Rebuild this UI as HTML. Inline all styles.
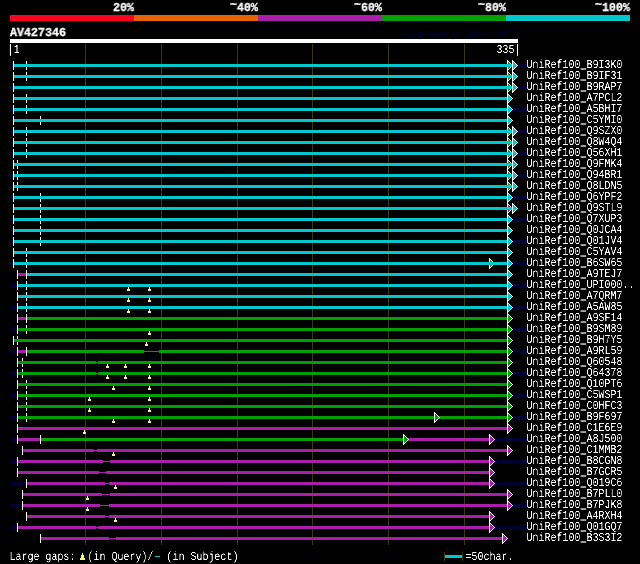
<!DOCTYPE html>
<html><head><meta charset="utf-8"><title>AlignView AV427346</title>
<style>
html,body{margin:0;padding:0;background:#000;}
#c{position:relative;width:640px;height:564px;background:#000;overflow:hidden;}
#c svg{position:absolute;left:0;top:0;}
#c span{position:absolute;display:block;white-space:pre;line-height:1;color:#fff;transform-origin:0 0;will-change:transform;text-rendering:geometricPrecision;font-family:"Liberation Mono",monospace;}
.s{font-size:12.14px;transform:scaleX(0.8237);padding-left:0.6px;filter:url(#sh);}
.s u{text-decoration:none;-webkit-text-stroke:0.25px #fff;}
.b{font-size:12.14px;font-weight:bold;transform:scaleX(0.961);-webkit-text-stroke:0.3px #fff;}
.b i{font-style:normal;position:relative;top:-3.5px;}
.t{font-size:10.62px;transform:scaleX(0.7847);}
</style></head><body>
<div id="c">
<svg width="640" height="564" viewBox="0 0 640 564" shape-rendering="crispEdges">
<defs><filter id="sh" x="0" y="0" width="100%" height="100%" color-interpolation-filters="sRGB"><feComponentTransfer><feFuncA type="linear" slope="2.5" intercept="-0.75"/></feComponentTransfer></filter></defs>
<rect x="10" y="15" width="124" height="6" fill="#ff001e"/>
<rect x="134" y="15" width="124" height="6" fill="#e66400"/>
<rect x="258" y="15" width="124" height="6" fill="#aa1eaa"/>
<rect x="382" y="15" width="124" height="6" fill="#00a000"/>
<rect x="506" y="15" width="124" height="6" fill="#00c8cc"/>
<rect x="10" y="39" width="508" height="4" fill="#ffffff"/>
<rect x="85" y="44" width="1" height="501" fill="#3c3a04"/>
<rect x="161" y="44" width="1" height="501" fill="#3c3a04"/>
<rect x="237" y="44" width="1" height="501" fill="#3c3a04"/>
<rect x="312" y="44" width="1" height="501" fill="#3c3a04"/>
<rect x="388" y="44" width="1" height="501" fill="#3c3a04"/>
<rect x="464" y="44" width="1" height="501" fill="#3c3a04"/>
<rect x="10" y="64" width="517" height="3" fill="#000032"/>
<rect x="10" y="86" width="517" height="3" fill="#000032"/>
<rect x="10" y="108" width="517" height="3" fill="#000032"/>
<rect x="10" y="130" width="517" height="3" fill="#000032"/>
<rect x="10" y="152" width="517" height="3" fill="#000032"/>
<rect x="10" y="174" width="517" height="3" fill="#000032"/>
<rect x="10" y="196" width="517" height="3" fill="#000032"/>
<rect x="10" y="218" width="517" height="3" fill="#000032"/>
<rect x="10" y="240" width="517" height="3" fill="#000032"/>
<rect x="10" y="262" width="517" height="3" fill="#000032"/>
<rect x="10" y="284" width="517" height="3" fill="#000032"/>
<rect x="10" y="306" width="517" height="3" fill="#000032"/>
<rect x="10" y="328" width="517" height="3" fill="#000032"/>
<rect x="10" y="350" width="517" height="3" fill="#000032"/>
<rect x="10" y="372" width="517" height="3" fill="#000032"/>
<rect x="10" y="394" width="517" height="3" fill="#000032"/>
<rect x="10" y="416" width="517" height="3" fill="#000032"/>
<rect x="10" y="438" width="517" height="3" fill="#000032"/>
<rect x="10" y="460" width="517" height="3" fill="#000032"/>
<rect x="10" y="482" width="517" height="3" fill="#000032"/>
<rect x="10" y="504" width="517" height="3" fill="#000032"/>
<rect x="10" y="526" width="517" height="3" fill="#000032"/>
<rect x="26" y="61" width="1" height="9" fill="#ffffff"/>
<polygon points="507.5,60.5 507.5,70.5 512.5,65.5" fill="#00a000" stroke="#ffffff" stroke-width="1"/>
<rect x="13" y="61" width="1" height="9" fill="#ffffff"/>
<rect x="14" y="64" width="498" height="3" fill="#00c8cc"/>
<polygon points="512.5,60.5 512.5,70.5 517.5,65.5" fill="#00c8cc" stroke="#ffffff" stroke-width="1"/>
<rect x="26" y="72" width="1" height="9" fill="#ffffff"/>
<polygon points="507.5,71.5 507.5,81.5 512.5,76.5" fill="#00a000" stroke="#ffffff" stroke-width="1"/>
<rect x="13" y="72" width="1" height="9" fill="#ffffff"/>
<rect x="14" y="75" width="498" height="3" fill="#00c8cc"/>
<polygon points="512.5,71.5 512.5,81.5 517.5,76.5" fill="#00c8cc" stroke="#ffffff" stroke-width="1"/>
<polygon points="507.5,82.5 507.5,92.5 512.5,87.5" fill="#00a000" stroke="#ffffff" stroke-width="1"/>
<rect x="13" y="83" width="1" height="9" fill="#ffffff"/>
<rect x="14" y="86" width="498" height="3" fill="#00c8cc"/>
<polygon points="512.5,82.5 512.5,92.5 517.5,87.5" fill="#00c8cc" stroke="#ffffff" stroke-width="1"/>
<rect x="26" y="94" width="1" height="9" fill="#ffffff"/>
<rect x="13" y="94" width="1" height="9" fill="#ffffff"/>
<rect x="14" y="97" width="493" height="3" fill="#00c8cc"/>
<polygon points="507.5,93.5 507.5,103.5 512.5,98.5" fill="#00c8cc" stroke="#ffffff" stroke-width="1"/>
<rect x="26" y="105" width="1" height="9" fill="#ffffff"/>
<rect x="13" y="105" width="1" height="9" fill="#ffffff"/>
<rect x="14" y="108" width="493" height="3" fill="#00c8cc"/>
<polygon points="507.5,104.5 507.5,114.5 512.5,109.5" fill="#00c8cc" stroke="#ffffff" stroke-width="1"/>
<rect x="40" y="116" width="1" height="9" fill="#ffffff"/>
<rect x="13" y="116" width="1" height="9" fill="#ffffff"/>
<rect x="14" y="119" width="493" height="3" fill="#00c8cc"/>
<polygon points="507.5,115.5 507.5,125.5 512.5,120.5" fill="#00c8cc" stroke="#ffffff" stroke-width="1"/>
<rect x="26" y="127" width="1" height="9" fill="#ffffff"/>
<polygon points="507.5,126.5 507.5,136.5 512.5,131.5" fill="#00a000" stroke="#ffffff" stroke-width="1"/>
<rect x="13" y="127" width="1" height="9" fill="#ffffff"/>
<rect x="14" y="130" width="498" height="3" fill="#00c8cc"/>
<polygon points="512.5,126.5 512.5,136.5 517.5,131.5" fill="#00c8cc" stroke="#ffffff" stroke-width="1"/>
<rect x="26" y="138" width="1" height="9" fill="#ffffff"/>
<polygon points="507.5,137.5 507.5,147.5 512.5,142.5" fill="#00a000" stroke="#ffffff" stroke-width="1"/>
<rect x="13" y="138" width="1" height="9" fill="#ffffff"/>
<rect x="14" y="141" width="498" height="3" fill="#00c8cc"/>
<polygon points="512.5,137.5 512.5,147.5 517.5,142.5" fill="#00c8cc" stroke="#ffffff" stroke-width="1"/>
<rect x="26" y="149" width="1" height="9" fill="#ffffff"/>
<polygon points="507.5,148.5 507.5,158.5 512.5,153.5" fill="#00a000" stroke="#ffffff" stroke-width="1"/>
<rect x="13" y="149" width="1" height="9" fill="#ffffff"/>
<rect x="14" y="152" width="498" height="3" fill="#00c8cc"/>
<polygon points="512.5,148.5 512.5,158.5 517.5,153.5" fill="#00c8cc" stroke="#ffffff" stroke-width="1"/>
<rect x="17" y="160" width="1" height="9" fill="#ffffff"/>
<polygon points="507.5,159.5 507.5,169.5 512.5,164.5" fill="#00a000" stroke="#ffffff" stroke-width="1"/>
<rect x="13" y="160" width="1" height="9" fill="#ffffff"/>
<rect x="14" y="163" width="498" height="3" fill="#00c8cc"/>
<polygon points="512.5,159.5 512.5,169.5 517.5,164.5" fill="#00c8cc" stroke="#ffffff" stroke-width="1"/>
<rect x="17" y="171" width="1" height="9" fill="#ffffff"/>
<polygon points="507.5,170.5 507.5,180.5 512.5,175.5" fill="#00a000" stroke="#ffffff" stroke-width="1"/>
<rect x="13" y="171" width="1" height="9" fill="#ffffff"/>
<rect x="14" y="174" width="498" height="3" fill="#00c8cc"/>
<polygon points="512.5,170.5 512.5,180.5 517.5,175.5" fill="#00c8cc" stroke="#ffffff" stroke-width="1"/>
<rect x="17" y="182" width="1" height="9" fill="#ffffff"/>
<polygon points="507.5,181.5 507.5,191.5 512.5,186.5" fill="#00a000" stroke="#ffffff" stroke-width="1"/>
<rect x="13" y="182" width="1" height="9" fill="#ffffff"/>
<rect x="14" y="185" width="498" height="3" fill="#00c8cc"/>
<polygon points="512.5,181.5 512.5,191.5 517.5,186.5" fill="#00c8cc" stroke="#ffffff" stroke-width="1"/>
<rect x="40" y="193" width="1" height="9" fill="#ffffff"/>
<rect x="13" y="193" width="1" height="9" fill="#ffffff"/>
<rect x="14" y="196" width="493" height="3" fill="#00c8cc"/>
<polygon points="507.5,192.5 507.5,202.5 512.5,197.5" fill="#00c8cc" stroke="#ffffff" stroke-width="1"/>
<rect x="40" y="204" width="1" height="9" fill="#ffffff"/>
<polygon points="507.5,203.5 507.5,213.5 512.5,208.5" fill="#aa1eaa" stroke="#ffffff" stroke-width="1"/>
<rect x="13" y="204" width="1" height="9" fill="#ffffff"/>
<rect x="14" y="207" width="498" height="3" fill="#00c8cc"/>
<polygon points="512.5,203.5 512.5,213.5 517.5,208.5" fill="#00c8cc" stroke="#ffffff" stroke-width="1"/>
<rect x="40" y="215" width="1" height="9" fill="#ffffff"/>
<rect x="13" y="215" width="1" height="9" fill="#ffffff"/>
<rect x="14" y="218" width="493" height="3" fill="#00c8cc"/>
<polygon points="507.5,214.5 507.5,224.5 512.5,219.5" fill="#00c8cc" stroke="#ffffff" stroke-width="1"/>
<rect x="40" y="226" width="1" height="9" fill="#ffffff"/>
<rect x="13" y="226" width="1" height="9" fill="#ffffff"/>
<rect x="14" y="229" width="493" height="3" fill="#00c8cc"/>
<polygon points="507.5,225.5 507.5,235.5 512.5,230.5" fill="#00c8cc" stroke="#ffffff" stroke-width="1"/>
<rect x="40" y="237" width="1" height="9" fill="#ffffff"/>
<rect x="13" y="237" width="1" height="9" fill="#ffffff"/>
<rect x="14" y="240" width="493" height="3" fill="#00c8cc"/>
<polygon points="507.5,236.5 507.5,246.5 512.5,241.5" fill="#00c8cc" stroke="#ffffff" stroke-width="1"/>
<rect x="26" y="248" width="1" height="9" fill="#ffffff"/>
<rect x="13" y="248" width="1" height="9" fill="#ffffff"/>
<rect x="14" y="251" width="493" height="3" fill="#00c8cc"/>
<polygon points="507.5,247.5 507.5,257.5 512.5,252.5" fill="#00c8cc" stroke="#ffffff" stroke-width="1"/>
<rect x="26" y="259" width="1" height="9" fill="#ffffff"/>
<polygon points="489.5,258.5 489.5,268.5 494.5,263.5" fill="#00a000" stroke="#ffffff" stroke-width="1"/>
<rect x="13" y="259" width="1" height="9" fill="#ffffff"/>
<rect x="14" y="262" width="493" height="3" fill="#00c8cc"/>
<polygon points="507.5,258.5 507.5,268.5 512.5,263.5" fill="#00c8cc" stroke="#ffffff" stroke-width="1"/>
<rect x="17" y="270" width="1" height="9" fill="#ffffff"/>
<rect x="18" y="273" width="8" height="3" fill="#aa1eaa"/>
<rect x="26" y="270" width="1" height="9" fill="#ffffff"/>
<rect x="27" y="273" width="480" height="3" fill="#00c8cc"/>
<polygon points="507.5,269.5 507.5,279.5 512.5,274.5" fill="#00c8cc" stroke="#ffffff" stroke-width="1"/>
<rect x="26" y="281" width="1" height="9" fill="#ffffff"/>
<rect x="17" y="281" width="1" height="9" fill="#ffffff"/>
<rect x="18" y="284" width="489" height="3" fill="#00c8cc"/>
<polygon points="507.5,280.5 507.5,290.5 512.5,285.5" fill="#00c8cc" stroke="#ffffff" stroke-width="1"/>
<rect x="128" y="287" width="1" height="2" fill="#fff47a"/>
<rect x="127" y="289" width="3" height="2" fill="#fff47a"/>
<rect x="149" y="287" width="1" height="2" fill="#fff47a"/>
<rect x="148" y="289" width="3" height="2" fill="#fff47a"/>
<rect x="26" y="292" width="1" height="9" fill="#ffffff"/>
<rect x="17" y="292" width="1" height="9" fill="#ffffff"/>
<rect x="18" y="295" width="489" height="3" fill="#00c8cc"/>
<polygon points="507.5,291.5 507.5,301.5 512.5,296.5" fill="#00c8cc" stroke="#ffffff" stroke-width="1"/>
<rect x="128" y="298" width="1" height="2" fill="#fff47a"/>
<rect x="127" y="300" width="3" height="2" fill="#fff47a"/>
<rect x="149" y="298" width="1" height="2" fill="#fff47a"/>
<rect x="148" y="300" width="3" height="2" fill="#fff47a"/>
<rect x="26" y="303" width="1" height="9" fill="#ffffff"/>
<rect x="17" y="303" width="1" height="9" fill="#ffffff"/>
<rect x="18" y="306" width="489" height="3" fill="#00c8cc"/>
<polygon points="507.5,302.5 507.5,312.5 512.5,307.5" fill="#00c8cc" stroke="#ffffff" stroke-width="1"/>
<rect x="128" y="309" width="1" height="2" fill="#fff47a"/>
<rect x="127" y="311" width="3" height="2" fill="#fff47a"/>
<rect x="149" y="309" width="1" height="2" fill="#fff47a"/>
<rect x="148" y="311" width="3" height="2" fill="#fff47a"/>
<rect x="17" y="314" width="1" height="9" fill="#ffffff"/>
<rect x="18" y="317" width="8" height="3" fill="#aa1eaa"/>
<rect x="26" y="314" width="1" height="9" fill="#ffffff"/>
<rect x="27" y="317" width="480" height="3" fill="#00a000"/>
<polygon points="507.5,313.5 507.5,323.5 512.5,318.5" fill="#00a000" stroke="#ffffff" stroke-width="1"/>
<rect x="26" y="325" width="1" height="9" fill="#ffffff"/>
<rect x="17" y="325" width="1" height="9" fill="#ffffff"/>
<rect x="18" y="328" width="489" height="3" fill="#00a000"/>
<polygon points="507.5,324.5 507.5,334.5 512.5,329.5" fill="#00a000" stroke="#ffffff" stroke-width="1"/>
<rect x="149" y="331" width="1" height="2" fill="#fff47a"/>
<rect x="148" y="333" width="3" height="2" fill="#fff47a"/>
<rect x="17" y="336" width="1" height="9" fill="#ffffff"/>
<rect x="13" y="336" width="1" height="9" fill="#ffffff"/>
<rect x="14" y="339" width="493" height="3" fill="#00a000"/>
<polygon points="507.5,335.5 507.5,345.5 512.5,340.5" fill="#00a000" stroke="#ffffff" stroke-width="1"/>
<rect x="146" y="342" width="1" height="2" fill="#fff47a"/>
<rect x="145" y="344" width="3" height="2" fill="#fff47a"/>
<rect x="17" y="347" width="1" height="9" fill="#ffffff"/>
<rect x="18" y="350" width="8" height="3" fill="#aa1eaa"/>
<rect x="26" y="347" width="1" height="9" fill="#ffffff"/>
<rect x="27" y="350" width="117" height="3" fill="#00a000"/>
<rect x="144" y="350" width="15" height="3" fill="#000"/>
<rect x="144" y="351" width="15" height="1" fill="#00a000"/>
<rect x="159" y="350" width="348" height="3" fill="#00a000"/>
<polygon points="507.5,346.5 507.5,356.5 512.5,351.5" fill="#00a000" stroke="#ffffff" stroke-width="1"/>
<rect x="22" y="358" width="1" height="9" fill="#ffffff"/>
<rect x="17" y="358" width="1" height="9" fill="#ffffff"/>
<rect x="18" y="361" width="78" height="3" fill="#00a000"/>
<rect x="96" y="361" width="2" height="3" fill="#000"/>
<rect x="96" y="362" width="2" height="1" fill="#00a000"/>
<rect x="98" y="361" width="409" height="3" fill="#00a000"/>
<polygon points="507.5,357.5 507.5,367.5 512.5,362.5" fill="#00a000" stroke="#ffffff" stroke-width="1"/>
<rect x="107" y="364" width="1" height="2" fill="#fff47a"/>
<rect x="106" y="366" width="3" height="2" fill="#fff47a"/>
<rect x="125" y="364" width="1" height="2" fill="#fff47a"/>
<rect x="124" y="366" width="3" height="2" fill="#fff47a"/>
<rect x="149" y="364" width="1" height="2" fill="#fff47a"/>
<rect x="148" y="366" width="3" height="2" fill="#fff47a"/>
<rect x="22" y="369" width="1" height="9" fill="#ffffff"/>
<rect x="17" y="369" width="1" height="9" fill="#ffffff"/>
<rect x="18" y="372" width="78" height="3" fill="#00a000"/>
<rect x="96" y="372" width="2" height="3" fill="#000"/>
<rect x="96" y="373" width="2" height="1" fill="#00a000"/>
<rect x="98" y="372" width="409" height="3" fill="#00a000"/>
<polygon points="507.5,368.5 507.5,378.5 512.5,373.5" fill="#00a000" stroke="#ffffff" stroke-width="1"/>
<rect x="107" y="375" width="1" height="2" fill="#fff47a"/>
<rect x="106" y="377" width="3" height="2" fill="#fff47a"/>
<rect x="125" y="375" width="1" height="2" fill="#fff47a"/>
<rect x="124" y="377" width="3" height="2" fill="#fff47a"/>
<rect x="149" y="375" width="1" height="2" fill="#fff47a"/>
<rect x="148" y="377" width="3" height="2" fill="#fff47a"/>
<rect x="26" y="380" width="1" height="9" fill="#ffffff"/>
<rect x="17" y="380" width="1" height="9" fill="#ffffff"/>
<rect x="18" y="383" width="489" height="3" fill="#00a000"/>
<polygon points="507.5,379.5 507.5,389.5 512.5,384.5" fill="#00a000" stroke="#ffffff" stroke-width="1"/>
<rect x="113" y="386" width="1" height="2" fill="#fff47a"/>
<rect x="112" y="388" width="3" height="2" fill="#fff47a"/>
<rect x="149" y="386" width="1" height="2" fill="#fff47a"/>
<rect x="148" y="388" width="3" height="2" fill="#fff47a"/>
<rect x="26" y="391" width="1" height="9" fill="#ffffff"/>
<rect x="17" y="391" width="1" height="9" fill="#ffffff"/>
<rect x="18" y="394" width="489" height="3" fill="#00a000"/>
<polygon points="507.5,390.5 507.5,400.5 512.5,395.5" fill="#00a000" stroke="#ffffff" stroke-width="1"/>
<rect x="89" y="397" width="1" height="2" fill="#fff47a"/>
<rect x="88" y="399" width="3" height="2" fill="#fff47a"/>
<rect x="149" y="397" width="1" height="2" fill="#fff47a"/>
<rect x="148" y="399" width="3" height="2" fill="#fff47a"/>
<rect x="26" y="402" width="1" height="9" fill="#ffffff"/>
<rect x="17" y="402" width="1" height="9" fill="#ffffff"/>
<rect x="18" y="405" width="489" height="3" fill="#00a000"/>
<polygon points="507.5,401.5 507.5,411.5 512.5,406.5" fill="#00a000" stroke="#ffffff" stroke-width="1"/>
<rect x="89" y="408" width="1" height="2" fill="#fff47a"/>
<rect x="88" y="410" width="3" height="2" fill="#fff47a"/>
<rect x="149" y="408" width="1" height="2" fill="#fff47a"/>
<rect x="148" y="410" width="3" height="2" fill="#fff47a"/>
<rect x="26" y="413" width="1" height="9" fill="#ffffff"/>
<rect x="17" y="413" width="1" height="9" fill="#ffffff"/>
<rect x="18" y="416" width="489" height="3" fill="#00a000"/>
<polygon points="507.5,412.5 507.5,422.5 512.5,417.5" fill="#00a000" stroke="#ffffff" stroke-width="1"/>
<polygon points="434.5,412.5 434.5,422.5 439.5,417.5" fill="#00a000" stroke="#ffffff" stroke-width="1"/>
<rect x="113" y="419" width="1" height="2" fill="#fff47a"/>
<rect x="112" y="421" width="3" height="2" fill="#fff47a"/>
<rect x="149" y="419" width="1" height="2" fill="#fff47a"/>
<rect x="148" y="421" width="3" height="2" fill="#fff47a"/>
<rect x="17" y="424" width="1" height="9" fill="#ffffff"/>
<rect x="18" y="427" width="489" height="3" fill="#aa1eaa"/>
<polygon points="507.5,423.5 507.5,433.5 512.5,428.5" fill="#aa1eaa" stroke="#ffffff" stroke-width="1"/>
<rect x="84" y="430" width="1" height="2" fill="#fff47a"/>
<rect x="83" y="432" width="3" height="2" fill="#fff47a"/>
<rect x="17" y="435" width="1" height="9" fill="#ffffff"/>
<rect x="18" y="438" width="471" height="3" fill="#aa1eaa"/>
<polygon points="489.5,434.5 489.5,444.5 494.5,439.5" fill="#aa1eaa" stroke="#ffffff" stroke-width="1"/>
<rect x="40" y="435" width="1" height="9" fill="#ffffff"/>
<rect x="41" y="438" width="362" height="3" fill="#00a000"/>
<polygon points="403.5,434.5 403.5,444.5 408.5,439.5" fill="#00a000" stroke="#ffffff" stroke-width="1"/>
<rect x="22" y="446" width="1" height="9" fill="#ffffff"/>
<rect x="23" y="449" width="71" height="3" fill="#aa1eaa"/>
<rect x="94" y="449" width="3" height="3" fill="#000"/>
<rect x="94" y="450" width="3" height="1" fill="#aa1eaa"/>
<rect x="97" y="449" width="410" height="3" fill="#aa1eaa"/>
<polygon points="507.5,445.5 507.5,455.5 512.5,450.5" fill="#aa1eaa" stroke="#ffffff" stroke-width="1"/>
<rect x="113" y="452" width="1" height="2" fill="#fff47a"/>
<rect x="112" y="454" width="3" height="2" fill="#fff47a"/>
<rect x="17" y="457" width="1" height="9" fill="#ffffff"/>
<rect x="18" y="460" width="85" height="3" fill="#aa1eaa"/>
<rect x="103" y="460" width="7" height="3" fill="#000"/>
<rect x="103" y="461" width="7" height="1" fill="#aa1eaa"/>
<rect x="110" y="460" width="379" height="3" fill="#aa1eaa"/>
<polygon points="489.5,456.5 489.5,466.5 494.5,461.5" fill="#aa1eaa" stroke="#ffffff" stroke-width="1"/>
<rect x="17" y="468" width="1" height="9" fill="#ffffff"/>
<rect x="18" y="471" width="81" height="3" fill="#aa1eaa"/>
<rect x="99" y="471" width="7" height="3" fill="#000"/>
<rect x="99" y="472" width="7" height="1" fill="#aa1eaa"/>
<rect x="106" y="471" width="383" height="3" fill="#aa1eaa"/>
<polygon points="489.5,467.5 489.5,477.5 494.5,472.5" fill="#aa1eaa" stroke="#ffffff" stroke-width="1"/>
<rect x="26" y="479" width="1" height="9" fill="#ffffff"/>
<rect x="27" y="482" width="78" height="3" fill="#aa1eaa"/>
<rect x="105" y="482" width="4" height="3" fill="#000"/>
<rect x="105" y="483" width="4" height="1" fill="#aa1eaa"/>
<rect x="109" y="482" width="380" height="3" fill="#aa1eaa"/>
<polygon points="489.5,478.5 489.5,488.5 494.5,483.5" fill="#aa1eaa" stroke="#ffffff" stroke-width="1"/>
<rect x="115" y="485" width="1" height="2" fill="#fff47a"/>
<rect x="114" y="487" width="3" height="2" fill="#fff47a"/>
<rect x="22" y="490" width="1" height="9" fill="#ffffff"/>
<rect x="23" y="493" width="79" height="3" fill="#aa1eaa"/>
<rect x="102" y="493" width="8" height="3" fill="#000"/>
<rect x="102" y="494" width="8" height="1" fill="#aa1eaa"/>
<rect x="110" y="493" width="397" height="3" fill="#aa1eaa"/>
<polygon points="507.5,489.5 507.5,499.5 512.5,494.5" fill="#aa1eaa" stroke="#ffffff" stroke-width="1"/>
<rect x="87" y="496" width="1" height="2" fill="#fff47a"/>
<rect x="86" y="498" width="3" height="2" fill="#fff47a"/>
<rect x="22" y="501" width="1" height="9" fill="#ffffff"/>
<rect x="23" y="504" width="77" height="3" fill="#aa1eaa"/>
<rect x="100" y="504" width="9" height="3" fill="#000"/>
<rect x="100" y="505" width="9" height="1" fill="#aa1eaa"/>
<rect x="109" y="504" width="398" height="3" fill="#aa1eaa"/>
<polygon points="507.5,500.5 507.5,510.5 512.5,505.5" fill="#aa1eaa" stroke="#ffffff" stroke-width="1"/>
<rect x="87" y="507" width="1" height="2" fill="#fff47a"/>
<rect x="86" y="509" width="3" height="2" fill="#fff47a"/>
<rect x="26" y="512" width="1" height="9" fill="#ffffff"/>
<rect x="27" y="515" width="78" height="3" fill="#aa1eaa"/>
<rect x="105" y="515" width="4" height="3" fill="#000"/>
<rect x="105" y="516" width="4" height="1" fill="#aa1eaa"/>
<rect x="109" y="515" width="380" height="3" fill="#aa1eaa"/>
<polygon points="489.5,511.5 489.5,521.5 494.5,516.5" fill="#aa1eaa" stroke="#ffffff" stroke-width="1"/>
<rect x="115" y="518" width="1" height="2" fill="#fff47a"/>
<rect x="114" y="520" width="3" height="2" fill="#fff47a"/>
<rect x="17" y="523" width="1" height="9" fill="#ffffff"/>
<rect x="18" y="526" width="78" height="3" fill="#aa1eaa"/>
<rect x="96" y="526" width="2" height="3" fill="#000"/>
<rect x="96" y="527" width="2" height="1" fill="#aa1eaa"/>
<rect x="98" y="526" width="391" height="3" fill="#aa1eaa"/>
<polygon points="489.5,522.5 489.5,532.5 494.5,527.5" fill="#aa1eaa" stroke="#ffffff" stroke-width="1"/>
<rect x="40" y="534" width="1" height="9" fill="#ffffff"/>
<rect x="41" y="537" width="68" height="3" fill="#aa1eaa"/>
<rect x="109" y="537" width="7" height="3" fill="#000"/>
<rect x="109" y="538" width="7" height="1" fill="#aa1eaa"/>
<rect x="116" y="537" width="386" height="3" fill="#aa1eaa"/>
<polygon points="502.5,533.5 502.5,543.5 507.5,538.5" fill="#aa1eaa" stroke="#ffffff" stroke-width="1"/>
<polygon points="82,553 83,553 83,555 84,555 84,558 85,558 85,560 80,560 80,558 81,558 81,555 82,555" fill="#fff47a"/>
<rect x="155" y="556" width="5" height="1" fill="#00c8cc"/>
<rect x="444" y="552" width="1" height="9" fill="#3c3a04"/>
<rect x="462" y="552" width="1" height="9" fill="#3c3a04"/>
<rect x="445" y="555" width="17" height="3" fill="#00c8cc"/>
</svg>
<span class="s" style="left:526px;top:59px">UniRef100<u>_</u>B9I3K0</span>
<span class="s" style="left:526px;top:70px">UniRef100<u>_</u>B9IF31</span>
<span class="s" style="left:526px;top:81px">UniRef100<u>_</u>B9RAP7</span>
<span class="s" style="left:526px;top:92px">UniRef100<u>_</u>A7PCL2</span>
<span class="s" style="left:526px;top:103px">UniRef100<u>_</u>A5BHI7</span>
<span class="s" style="left:526px;top:114px">UniRef100<u>_</u>C5YMI0</span>
<span class="s" style="left:526px;top:125px">UniRef100<u>_</u>Q9SZX0</span>
<span class="s" style="left:526px;top:136px">UniRef100<u>_</u>Q8W4Q4</span>
<span class="s" style="left:526px;top:147px">UniRef100<u>_</u>Q56XH1</span>
<span class="s" style="left:526px;top:158px">UniRef100<u>_</u>Q9FMK4</span>
<span class="s" style="left:526px;top:169px">UniRef100<u>_</u>Q94BR1</span>
<span class="s" style="left:526px;top:180px">UniRef100<u>_</u>Q8LDN5</span>
<span class="s" style="left:526px;top:191px">UniRef100<u>_</u>Q6YPF2</span>
<span class="s" style="left:526px;top:202px">UniRef100<u>_</u>Q9STL9</span>
<span class="s" style="left:526px;top:213px">UniRef100<u>_</u>Q7XUP3</span>
<span class="s" style="left:526px;top:224px">UniRef100<u>_</u>Q0JCA4</span>
<span class="s" style="left:526px;top:235px">UniRef100<u>_</u>Q01JV4</span>
<span class="s" style="left:526px;top:246px">UniRef100<u>_</u>C5YAV4</span>
<span class="s" style="left:526px;top:257px">UniRef100<u>_</u>B6SW65</span>
<span class="s" style="left:526px;top:268px">UniRef100<u>_</u>A9TEJ7</span>
<span class="s" style="left:526px;top:279px">UniRef100<u>_</u>UPI000..</span>
<span class="s" style="left:526px;top:290px">UniRef100<u>_</u>A7QRM7</span>
<span class="s" style="left:526px;top:301px">UniRef100<u>_</u>A5AW85</span>
<span class="s" style="left:526px;top:312px">UniRef100<u>_</u>A9SF14</span>
<span class="s" style="left:526px;top:323px">UniRef100<u>_</u>B9SM89</span>
<span class="s" style="left:526px;top:334px">UniRef100<u>_</u>B9H7Y5</span>
<span class="s" style="left:526px;top:345px">UniRef100<u>_</u>A9RL59</span>
<span class="s" style="left:526px;top:356px">UniRef100<u>_</u>Q60548</span>
<span class="s" style="left:526px;top:367px">UniRef100<u>_</u>Q64378</span>
<span class="s" style="left:526px;top:378px">UniRef100<u>_</u>Q10PT6</span>
<span class="s" style="left:526px;top:389px">UniRef100<u>_</u>C5WSP1</span>
<span class="s" style="left:526px;top:400px">UniRef100<u>_</u>C0HFC3</span>
<span class="s" style="left:526px;top:411px">UniRef100<u>_</u>B9F697</span>
<span class="s" style="left:526px;top:422px">UniRef100<u>_</u>C1E6E9</span>
<span class="s" style="left:526px;top:433px">UniRef100<u>_</u>A8J500</span>
<span class="s" style="left:526px;top:444px">UniRef100<u>_</u>C1MMB2</span>
<span class="s" style="left:526px;top:455px">UniRef100<u>_</u>B8CGN8</span>
<span class="s" style="left:526px;top:466px">UniRef100<u>_</u>B7GCR5</span>
<span class="s" style="left:526px;top:477px">UniRef100<u>_</u>Q019C6</span>
<span class="s" style="left:526px;top:488px">UniRef100<u>_</u>B7PLL0</span>
<span class="s" style="left:526px;top:499px">UniRef100<u>_</u>B7PJK8</span>
<span class="s" style="left:526px;top:510px">UniRef100<u>_</u>A4RXH4</span>
<span class="s" style="left:526px;top:521px">UniRef100<u>_</u>Q01GQ7</span>
<span class="s" style="left:526px;top:532px">UniRef100<u>_</u>B3S3I2</span>
<span class="s" style="left:7px;top:44px"><b>|</b>1</span>
<span class="s" style="left:496px;top:44px">335<b>|</b></span>
<span class="s" style="left:9px;top:551px">Large gaps:</span>
<span class="s" style="left:87px;top:551px">(in Query)/</span>
<span class="s" style="left:160px;top:551px">&nbsp;(in Subject)</span>
<span class="s" style="left:465px;top:551px">=50char.</span>
<span class="b" style="left:10px;top:27px">AV427346</span>
<span class="b" style="left:113px;top:2px">20%</span>
<span class="b" style="left:230px;top:2px"><i>~</i>40%</span>
<span class="b" style="left:354px;top:2px"><i>~</i>60%</span>
<span class="b" style="left:478px;top:2px"><i>~</i>80%</span>
<span class="b" style="left:595px;top:2px"><i>~</i>100%</span>
<span class="t" style="left:402px;top:30px;color:#00003c">AlignView.pm Beta rel.7</span>
</div>
</body></html>
